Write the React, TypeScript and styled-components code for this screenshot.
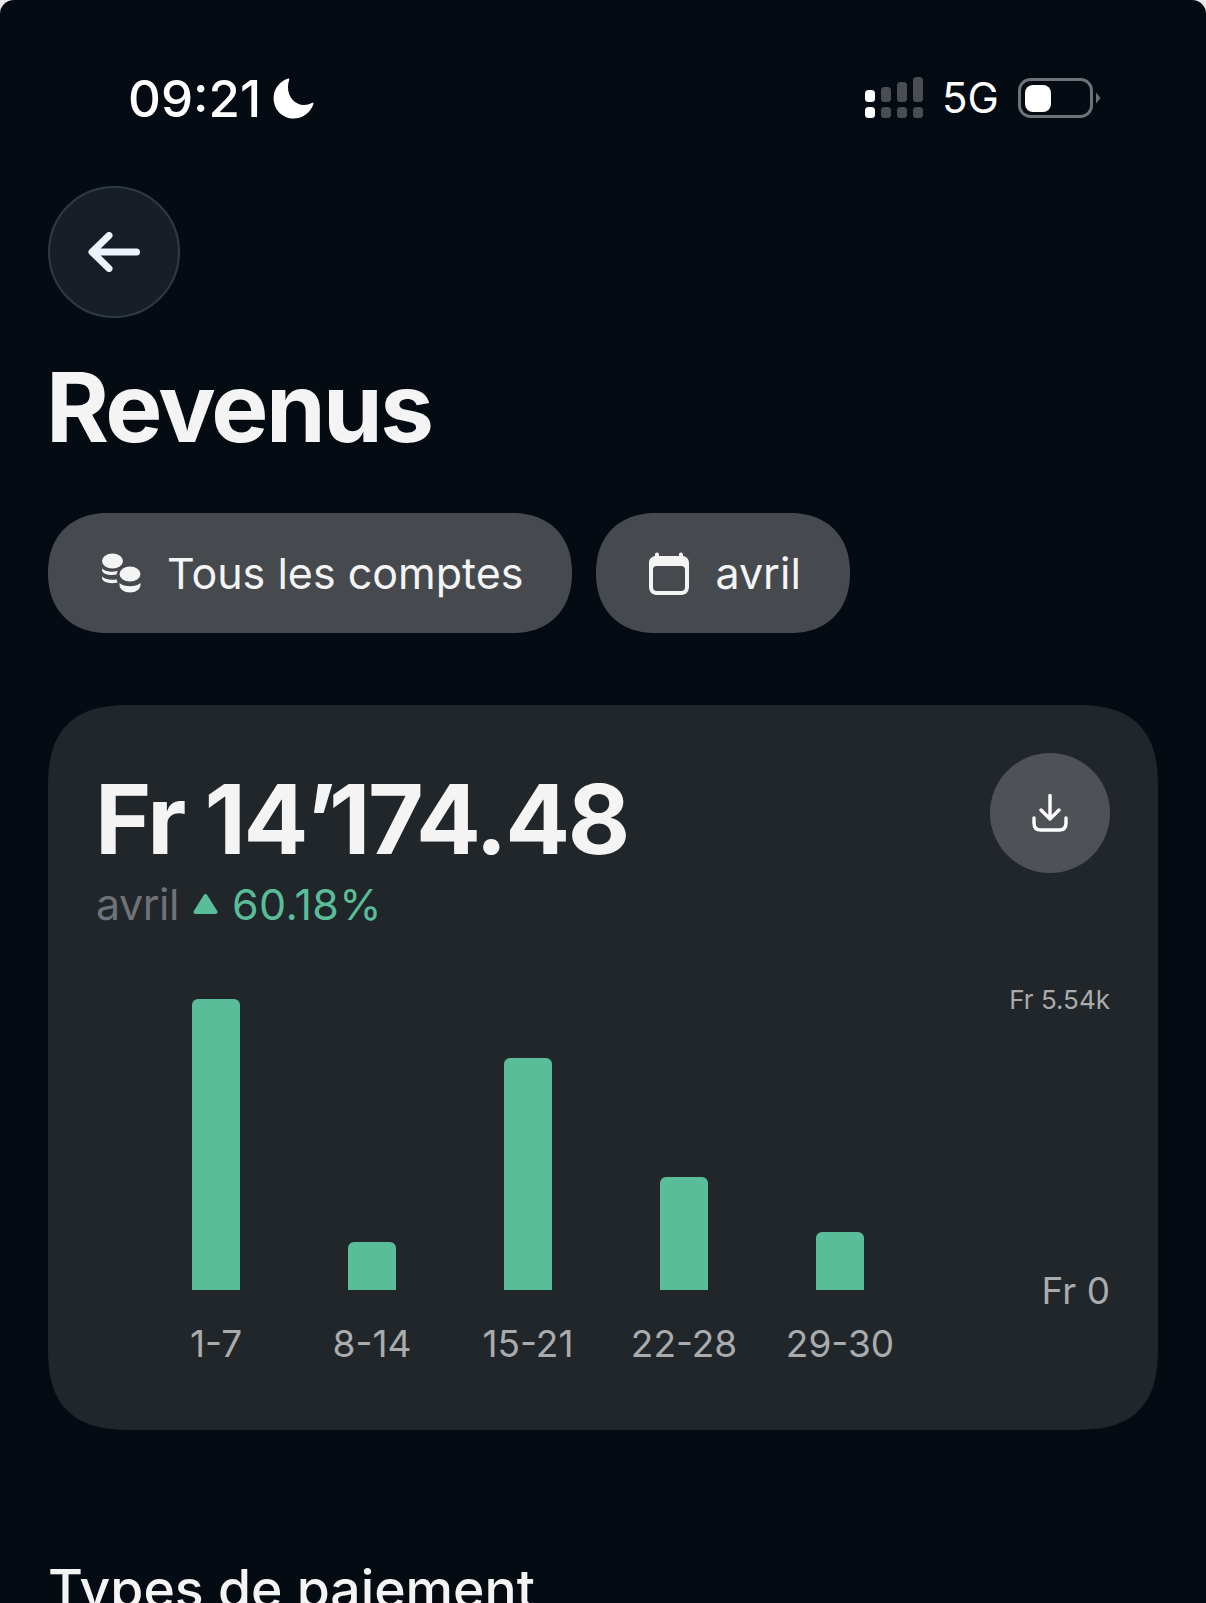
import React from "react";
import styled, { createGlobalStyle } from "styled-components";

const GlobalStyle = createGlobalStyle`
  html, body {
    margin: 0;
    padding: 0;
    background: #e9e9ea;
  }
  * {
    box-sizing: border-box;
  }
`;

const bars = [
  { label: "1-7", height: 291 },
  { label: "8-14", height: 48 },
  { label: "15-21", height: 232 },
  { label: "22-28", height: 113 },
  { label: "29-30", height: 58 },
];

export default function App() {
  return (
    <>
      <GlobalStyle />
      <Page>
        <StatusBar>
          <TimeGroup>
            <Time>09:21</Time>
            <svg width="41" height="41" viewBox="0 0 41 41">
              <path
                fill="#fff"
                d="M15 0.6C15.9 0.3 16.6 1.1 16.2 2C15.3 4.5 15 7 15 9.5C15 19 22 27 31 27C33.8 27 36.6 26.3 38.8 25C39.9 24.4 40.9 25.2 40.4 26.3C37.4 34.8 29.6 40.6 20.7 40.6C9.4 40.6 0.6 31.6 0.6 20.3C0.6 11.1 6.6 3.2 15 0.6Z"
              />
            </svg>
          </TimeGroup>
          <StatusIcons>
            <svg width="58" height="42" viewBox="0 0 58 42">
              <rect x="0" y="13" width="10" height="12" rx="3.5" fill="#fff" />
              <rect x="16" y="10" width="10" height="15" rx="3.5" fill="#4a4d52" />
              <rect x="32" y="5" width="10" height="20" rx="3.5" fill="#4a4d52" />
              <rect x="48" y="0" width="10" height="25" rx="3.5" fill="#4a4d52" />
              <rect x="0" y="30" width="10" height="11" rx="3.5" fill="#fff" />
              <rect x="16" y="30" width="10" height="11" rx="3.5" fill="#4a4d52" />
              <rect x="32" y="30" width="10" height="11" rx="3.5" fill="#4a4d52" />
              <rect x="48" y="30" width="10" height="11" rx="3.5" fill="#4a4d52" />
            </svg>
            <Network>5G</Network>
            <svg width="83" height="40" viewBox="0 0 83 40">
              <rect x="1.5" y="1.5" width="72" height="37" rx="11" fill="none" stroke="#6f7276" strokeWidth="3" />
              <rect x="7" y="7" width="26" height="27" rx="8" fill="#fff" />
              <path d="M78 14.5L82.5 20L78 25.5Z" fill="#6f7276" />
            </svg>
          </StatusIcons>
        </StatusBar>

        <BackButton>
          <svg width="52" height="40" viewBox="0 0 52 40" fill="none">
            <path
              d="M21 3.5L4 20L21 36.5M4.5 20H48.5"
              stroke="#edf3fb"
              strokeWidth="7"
              strokeLinecap="round"
              strokeLinejoin="round"
            />
          </svg>
        </BackButton>

        <Title>Revenus</Title>

        <Filters>
          <Pill>
            <svg width="40" height="40" viewBox="0 0 40 40" fill="#f4f4f5">
              <ellipse cx="11.5" cy="8" rx="10.5" ry="7.5" />
              <path d="M1 15.5C3.5 17.8 7 18.7 11 18.7C13 18.7 15 18.4 16.8 17.8C16 19 15.7 20.2 15.5 21.6C14.2 21.9 12.7 22 11 22C5.7 22 1 20 1 17Z" />
              <path d="M1 23.5C3.5 25.8 7 26.7 11 26.7C12.6 26.7 14 26.6 15.5 26.2C15.7 27.4 16.1 28.6 16.7 29.6C14.8 30 13 30.2 11 30.2C5.7 30.2 1 28 1 25Z" />
              <ellipse cx="29" cy="21" rx="10.5" ry="7.5" />
              <path d="M18.5 30C21 32.3 25 33.3 29 33.3C33 33.3 37 32.3 39.5 30V32C39.5 36 34.7 39.5 29 39.5C23.3 39.5 18.5 36 18.5 32Z" />
            </svg>
            <PillText>Tous les comptes</PillText>
          </Pill>
          <Pill>
            <svg width="40" height="43" viewBox="0 0 40 43">
              <path
                fill="#f4f4f5"
                fillRule="evenodd"
                d="M8 0.5C9.2 0.5 10 1.3 10 2.5V4H30V2.5C30 1.3 30.8 0.5 32 0.5C33.2 0.5 34 1.3 34 2.5V4C37.5 4.5 40 7.2 40 11V35C40 39.4 36.8 43 32.5 43H7.5C3.2 43 0 39.4 0 35V11C0 7.2 2.5 4.5 6 4V2.5C6 1.3 6.8 0.5 8 0.5ZM7.5 14C5.3 14 4 15.4 4 17.5V35C4 37.4 5.4 39 7.5 39H32.5C34.6 39 36 37.4 36 35V17.5C36 15.4 34.7 14 32.5 14Z"
              />
            </svg>
            <PillText>avril</PillText>
          </Pill>
        </Filters>

        <Card>
          <CardHead>
            <div>
              <Amount>
                Fr 14<Tick>’</Tick>174.48
              </Amount>
              <Period>
                <PeriodLabel>avril</PeriodLabel>
                <svg width="25" height="22" viewBox="0 0 25 22">
                  <path
                    d="M12.5 3L22.5 19H2.5Z"
                    fill="#5abd99"
                    stroke="#5abd99"
                    strokeWidth="4"
                    strokeLinejoin="round"
                  />
                </svg>
                <Change>60.18%</Change>
              </Period>
            </div>
            <DownloadButton>
              <svg width="36" height="38" viewBox="0 0 36 38" fill="none">
                <path
                  d="M18 1.5V24M9 16L18 25L27 16M2 24V29C2 33.5 4.5 36 9 36H27C31.5 36 34 33.5 34 29V24"
                  stroke="#fff"
                  strokeWidth="3.4"
                  strokeLinecap="round"
                  strokeLinejoin="round"
                />
              </svg>
            </DownloadButton>
          </CardHead>

          <Chart>
            <Bars>
              {bars.map((bar) => (
                <BarColumn key={bar.label}>
                  <BarTrack>
                    <Bar $height={bar.height} />
                  </BarTrack>
                  <BarLabel>{bar.label}</BarLabel>
                </BarColumn>
              ))}
            </Bars>
            <Axis>
              <AxisMax>Fr 5.54k</AxisMax>
              <AxisMin>Fr 0</AxisMin>
            </Axis>
          </Chart>
        </Card>

        <SectionTitle>Types de paiement</SectionTitle>
      </Page>
    </>
  );
}

const Page = styled.div`
  width: 1206px;
  height: 1603px;
  overflow: hidden;
  padding: 0 48px;
  background: #040b13;
  border-radius: 14px 14px 0 0;
  font-family: Inter, "Liberation Sans", sans-serif;
  color: #f4f4f5;
`;

const StatusBar = styled.div`
  display: flex;
  align-items: center;
  justify-content: space-between;
  height: 98px;
  padding: 49px 0 0 80px;
  box-sizing: content-box;
`;

const TimeGroup = styled.div`
  display: flex;
  align-items: center;
  gap: 12px;
`;

const Time = styled.span`
  font-size: 51px;
  font-weight: 500;
  line-height: 1;
  color: #fff;
`;

const StatusIcons = styled.div`
  display: flex;
  align-items: center;
  margin-right: 16px;
  width: 277px;
  gap: 19px;
`;

const Network = styled.span`
  font-size: 42px;
  line-height: 1;
  color: #fff;
`;

const BackButton = styled.div`
  display: flex;
  align-items: center;
  justify-content: center;
  width: 132px;
  height: 132px;
  margin-top: 39px;
  border-radius: 50%;
  background: #171e27;
  border: 2px solid #2f3a49;
`;

const Title = styled.h1`
  margin: 31px 0 0 -2px;
  font-size: 96px;
  font-weight: 700;
  line-height: 116px;
  letter-spacing: -2.6px;
`;

const Filters = styled.div`
  display: flex;
  gap: 24px;
  margin-top: 48px;
`;

const Pill = styled.div`
  display: flex;
  align-items: center;
  gap: 26px;
  height: 120px;
  padding: 0 49px 0 53px;
  border-radius: 60px;
  corner-shape: superellipse(1.15);
  background: #46494e;
`;

const PillText = styled.span`
  font-size: 43px;
  line-height: 1;
`;

const Card = styled.section`
  margin-top: 72px;
  width: 1110px;
  height: 725px;
  padding: 48px;
  border-radius: 84px;
  corner-shape: superellipse(1.4);
  background: #20262a;
`;

const CardHead = styled.div`
  display: flex;
  align-items: flex-start;
  justify-content: space-between;
`;

const Amount = styled.div`
  margin: 16px 0 0 -1px;
  font-size: 96px;
  font-weight: 700;
  line-height: 100px;
  letter-spacing: -2.3px;
`;

const Tick = styled.span`
  letter-spacing: -7px;
`;

const Period = styled.div`
  display: flex;
  align-items: center;
  gap: 14px;
  margin-top: 9px;
  font-size: 43px;
  line-height: 52px;
`;

const PeriodLabel = styled.span`
  letter-spacing: -0.5px;
  color: #6f7276;
`;

const Change = styled.span`
  letter-spacing: 0.4px;
  color: #5abd99;
`;

const DownloadButton = styled.div`
  display: flex;
  align-items: center;
  justify-content: center;
  width: 120px;
  height: 120px;
  border-radius: 50%;
  background: #4e5156;
`;

const Chart = styled.div`
  display: flex;
  justify-content: space-between;
  margin-top: 69px;
`;

const Bars = styled.div`
  display: flex;
  margin-left: 42px;
`;

const BarColumn = styled.div`
  display: flex;
  flex-direction: column;
  align-items: center;
  width: 156px;
`;

const BarTrack = styled.div`
  display: flex;
  align-items: flex-end;
  height: 291px;
`;

const Bar = styled.div<{ $height: number }>`
  width: 48px;
  height: ${({ $height }) => $height}px;
  border-radius: 6px 6px 0 0;
  background: #5abd99;
`;

const BarLabel = styled.span`
  margin-top: 32px;
  font-size: 37px;
  line-height: 44px;
  color: #a9abad;
`;

const Axis = styled.div`
  display: flex;
  flex-direction: column;
  align-items: flex-end;
  justify-content: space-between;
  height: 328px;
  margin-top: -14px;
`;

const AxisMax = styled.span`
  font-size: 26px;
  line-height: 30px;
  color: #a9abad;
`;

const AxisMin = styled.span`
  font-size: 37px;
  line-height: 44px;
  color: #a9abad;
`;

const SectionTitle = styled.h2`
  margin: 125px 0 0;
  font-size: 53.5px;
  font-weight: 500;
  line-height: 68px;
`;
